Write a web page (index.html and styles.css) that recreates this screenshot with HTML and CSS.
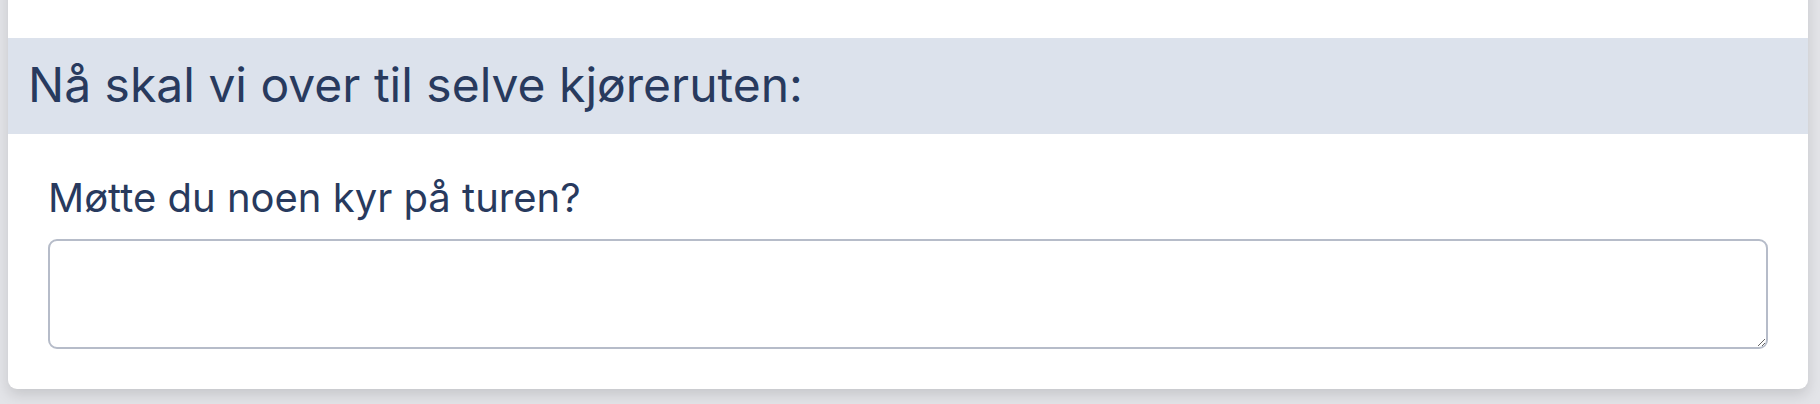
FILE: index.html
```html
<!DOCTYPE html>
<html lang="no">
<head>
  <meta charset="UTF-8" />
  <title>Kjøreruten</title>
  <link rel="stylesheet" href="styles.css">
</head>
<body>

<!-- Skjema-kort -->
<div class="card">
  <h2 class="section-title">Nå skal vi over til selve kjøreruten:</h2>

  <div class="question">
    <label for="kyr">Møtte du noen kyr på turen?</label>
    <textarea id="kyr" rows="3"></textarea>
  </div>
</div>

</body>
</html>
```

FILE: styles.css
```css
body {
  margin: 0;
  padding: 0 12px 15px 8px;
  background-color: #e3e4e8;
  font-family: 'Inter', 'Noto Sans', sans-serif;
  color: #283a5e;
}

.card {
  background-color: #fff;
  margin-top: -20px;
  padding-top: 58px;
  border-radius: 9px;
  box-shadow: 0 6px 14px rgba(0, 0, 0, 0.13);
}

.section-title {
  margin: 0;
  padding: 11px 20px 13px;
  background-color: #dce2ec;
  font-size: 48px;
  font-weight: 400;
  line-height: 72px;
}

.question {
  padding: 34px 40px 40px;
}

.question label {
  display: block;
  font-size: 40px;
  line-height: 60px;
  margin-bottom: 11px;
}

.question textarea {
  display: block;
  box-sizing: border-box;
  width: 100%;
  height: 110px;
  margin: 0;
  padding: 10px 14px;
  border: 2px solid #b6bcc9;
  border-radius: 9px;
  font-family: inherit;
  font-size: 32px;
  color: inherit;
  outline: none;
}
```
